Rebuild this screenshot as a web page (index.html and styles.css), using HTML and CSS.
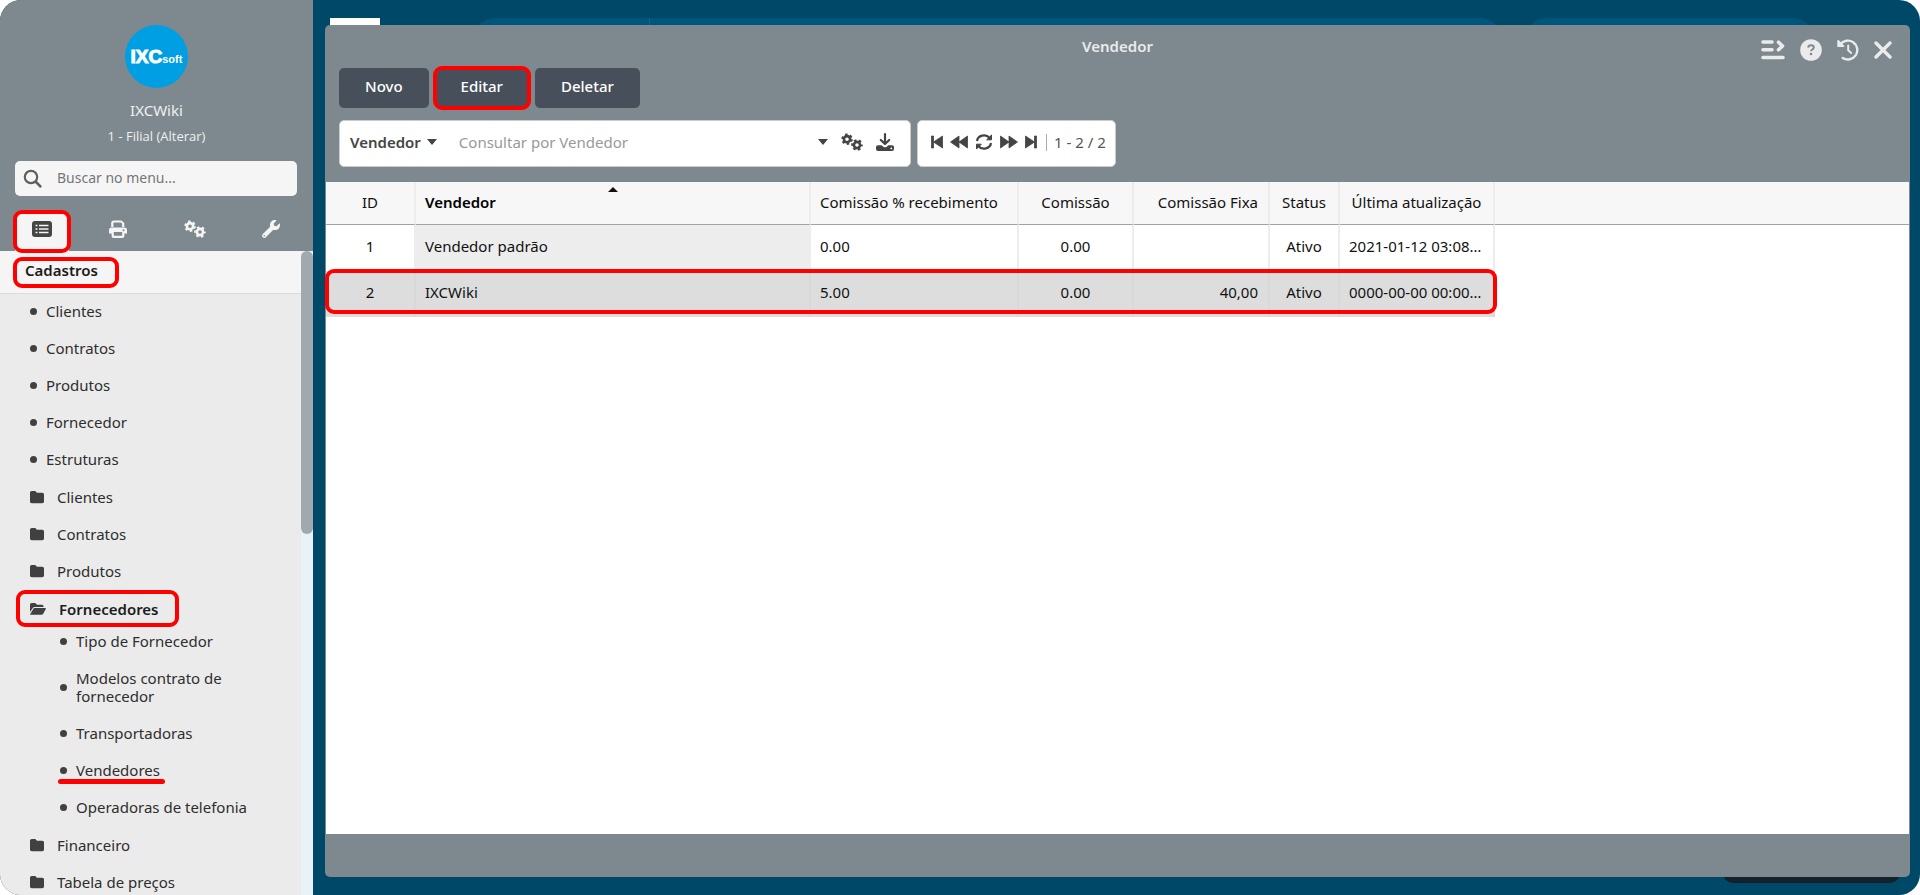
FILE: index.html
```html
<!DOCTYPE html>
<html lang="pt-BR">
<head>
<meta charset="utf-8">
<title>Vendedor</title>
<link rel="stylesheet" href="styles.css">
</head>
<body>
<svg class="defs" aria-hidden="true">
  <symbol id="gears" viewBox="0 0 22 18">
    <g fill="none" stroke="currentColor">
      <circle cx="6" cy="6.2" r="3.1" stroke-width="2.6"/>
      <circle cx="6" cy="6.2" r="4.7" stroke-width="2.2" stroke-dasharray="2.46 2.46"/>
      <circle cx="16" cy="12" r="3.1" stroke-width="2.6"/>
      <circle cx="16" cy="12" r="4.7" stroke-width="2.2" stroke-dasharray="2.46 2.46" stroke-dashoffset="1.2"/>
    </g>
  </symbol>
  <symbol id="folder" viewBox="0 0 512 512"><path fill="currentColor" d="M64 40h130l60 56h194c35 0 64 29 64 64v256c0 35-29 64-64 64H64c-35 0-64-29-64-64V104c0-35 29-64 64-64z"/></symbol>
</svg>
<div class="app">
  <aside class="sidebar">
    <header class="profile">
      <div class="logo"><span class="logo-main">IXC</span><span class="logo-sub">soft</span></div>
      <div class="user">IXCWiki</div>
      <a class="branch" href="#">1 - Filial (Alterar)</a>
      <label class="menu-search">
        <svg width="20" height="20" viewBox="0 0 20 20" fill="none" stroke="currentColor" stroke-width="2.2"><circle cx="8" cy="8" r="6.2"/><path d="M12.5 12.5l5.6 5.6" stroke-width="2.6"/></svg>
        <input type="text" placeholder="Buscar no menu..." aria-label="Buscar no menu">
      </label>
      <nav class="tabs">
        <button class="tab active mark" aria-label="Cadastros">
          <svg width="20" height="16" viewBox="0 0 20 16"><rect width="20" height="16" rx="3" fill="currentColor"/><path d="M3.5 4.5h2M3.5 8h2M3.5 11.5h2M7 4.5h9.5M7 8h9.5M7 11.5h9.5" stroke="#f5f5f5" stroke-width="1.6"/></svg>
        </button>
        <button class="tab" aria-label="Relatórios">
          <svg width="18" height="18" viewBox="0 0 18 18" fill="currentColor"><path d="M2.2 7V3a2.6 2.6 0 0 1 2.600-2.600h7.600l2.900 2.600v4h-2.200V3.800L12 2.500H5a.6.6 0 0 0-.6.6V7z"/><path fill-rule="evenodd" d="M2.500 7.500h13A2.500 2.500 0 0 1 18 10v3.500h-2.600V16a2 2 0 0 1-2 2H4.600a2 2 0 0 1-2-2v-2.500H0V10a2.500 2.500 0 0 1 2.500-2.500zM4.800 12v3.800h8.400V12zM14.500 9.300a1 1 0 1 0 0 2 1 1 0 0 0 0-2z"/></svg>
        </button>
        <button class="tab" aria-label="Configurações"><svg width="22" height="18"><use href="#gears"/></svg></button>
        <button class="tab" aria-label="Ferramentas">
          <svg width="18" height="18" viewBox="0 0 512 512"><path fill="currentColor" d="M507.730 109.100c-2.240-9.030-13.540-12.090-20.120-5.510l-74.360 74.360-67.880-11.310-11.310-67.880 74.360-74.360c6.620-6.620 3.430-17.900-5.660-20.160-47.380-11.740-99.550.91-136.580 37.930-39.640 39.640-50.550 97.100-34.050 147.200L18.740 402.760c-24.990 24.990-24.990 65.510 0 90.500 24.990 24.990 65.510 24.990 90.500 0l213.210-213.210c50.120 16.710 107.470 5.680 147.370-34.220 37.070-37.070 49.700-89.320 37.910-136.730zM64 472c-13.250 0-24-10.750-24-24 0-13.260 10.750-24 24-24s24 10.740 24 24c0 13.250-10.750 24-24 24z"/></svg>
        </button>
      </nav>
    </header>
    <div class="menu">
      <div class="menu-body">
        <h2 class="menu-title"><span class="mark">Cadastros</span></h2>
        <ul class="list">
          <li><a class="item" href="#"><i class="dot"></i>Clientes</a></li>
          <li><a class="item" href="#"><i class="dot"></i>Contratos</a></li>
          <li><a class="item" href="#"><i class="dot"></i>Produtos</a></li>
          <li><a class="item" href="#"><i class="dot"></i>Fornecedor</a></li>
          <li><a class="item" href="#"><i class="dot"></i>Estruturas</a></li>
          <li><a class="item folder" href="#"><svg width="14" height="14"><use href="#folder"/></svg>Clientes</a></li>
          <li><a class="item folder" href="#"><svg width="14" height="14"><use href="#folder"/></svg>Contratos</a></li>
          <li><a class="item folder" href="#"><svg width="14" height="14"><use href="#folder"/></svg>Produtos</a></li>
          <li>
            <a class="item folder open mark" href="#"><svg width="16" height="14" viewBox="0 0 16 14" fill="currentColor"><path d="M0 10V2.500A1.500 1.500 0 0 1 1.500 1h3.800L7 2.700h5A1.500 1.500 0 0 1 13.500 4.200V5H4.800A2.500 2.500 0 0 0 2.600 6.300z"/><path d="M4.600 6H15.300a.6.6 0 0 1 .5.9l-2.600 4.900a2 2 0 0 1-1.700 1H.8a.6.600 0 0 1-.5-.9L3.400 6.700A1.400 1.400 0 0 1 4.600 6z"/></svg>Fornecedores</a>
            <ul class="list sub">
              <li><a class="item" href="#"><i class="dot"></i>Tipo de Fornecedor</a></li>
              <li><a class="item" href="#"><i class="dot"></i>Modelos contrato de fornecedor</a></li>
              <li><a class="item" href="#"><i class="dot"></i>Transportadoras</a></li>
              <li><a class="item underlined" href="#"><i class="dot"></i>Vendedores</a></li>
              <li><a class="item" href="#"><i class="dot"></i>Operadoras de telefonia</a></li>
            </ul>
          </li>
          <li><a class="item folder" href="#"><svg width="14" height="14"><use href="#folder"/></svg>Financeiro</a></li>
          <li><a class="item folder" href="#"><svg width="14" height="14"><use href="#folder"/></svg>Tabela de preços</a></li>
        </ul>
      </div>
      <div class="scrollbar"><div class="thumb"></div></div>
    </div>
  </aside>

  <main class="desktop">
    <div class="backdrop" aria-hidden="true">
      <div class="tile"></div>
      <div class="pill wide"></div>
      <div class="pill narrow"></div>
      <div class="toast"></div>
    </div>
    <section class="window">
      <header class="window-head">
        <h1 class="window-title">Vendedor</h1>
        <div class="window-tools">
          <button aria-label="Menu"><svg width="24" height="20" viewBox="0 0 24 20" fill="none" stroke="currentColor" stroke-width="3.600" stroke-linecap="round" stroke-linejoin="round"><path d="M2 2h9M2 9.800h9M2 17.500h20M17.500 2.200l4 3.800-4 3.800"/></svg></button>
          <button aria-label="Ajuda"><svg width="22" height="22" viewBox="0 0 22 22"><circle cx="11" cy="11" r="10.800" fill="currentColor"/><path d="M8.200 8.600c.1-1.500 1.200-2.300 2.800-2.300s2.800.9 2.800 2.300c0 1.900-2.700 2-2.700 3.700" fill="none" stroke="#7d898e" stroke-width="1.900"/><circle cx="11" cy="15" r="1.300" fill="#7d898e"/></svg></button>
          <button aria-label="Histórico"><svg width="22" height="22" viewBox="0 0 22 22" fill="none" stroke="currentColor" stroke-width="2.400" stroke-linecap="round" stroke-linejoin="round"><path d="M3.200 5.600A9.400 9.400 0 1 1 5.700 18.900"/><path d="M1.200 2v5.200h5.200z" fill="currentColor" stroke-width="1.800"/><path d="M11.200 6.500v4.800l3 2.700" stroke-width="2"/></svg></button>
          <button aria-label="Fechar"><svg width="18" height="18" viewBox="0 0 18 18" fill="none" stroke="currentColor" stroke-width="3.400" stroke-linecap="round"><path d="M2 2l14 14M16 2L2 16"/></svg></button>
        </div>
        <div class="actions">
          <button class="action">Novo</button>
          <button class="action mark">Editar</button>
          <button class="action">Deletar</button>
        </div>
        <div class="filters">
          <div class="panel query">
            <button class="field">Vendedor<i class="caret"></i></button>
            <input type="text" placeholder="Consultar por Vendedor" aria-label="Consultar por Vendedor">
            <button aria-label="Opções"><i class="caret"></i></button>
            <button aria-label="Configurar"><svg width="22" height="18"><use href="#gears"/></svg></button>
            <button aria-label="Exportar"><svg width="18" height="18" viewBox="0 0 18 18" fill="none" stroke="currentColor" stroke-width="2.200" stroke-linecap="round" stroke-linejoin="round"><path d="M9 1.200v9M4.800 7L9 11l4.200-4"/><path fill="currentColor" stroke="none" fill-rule="evenodd" d="M2 12.300h3.500L8 14.200h2l2.500-1.900H16a2 2 0 0 1 2 2V16a2 2 0 0 1-2 2H2a2 2 0 0 1-2-2v-1.700a2 2 0 0 1 2-2zm13.300 2.200a.9.9 0 1 0 0 1.800.9.9 0 0 0 0-1.800z"/></svg></button>
          </div>
          <div class="panel pager">
            <button aria-label="Primeira"><svg width="12" height="14" viewBox="0 0 12 14" fill="currentColor"><path d="M.5 1h2v12h-2zM11.500 1v12L2.500 7z" stroke="currentColor" stroke-width=".8"/></svg></button>
            <button aria-label="Anterior"><svg width="18" height="14" viewBox="0 0 18 14" fill="currentColor"><path d="M9 1v12L.5 7zM17.500 1v12L9 7z" stroke="currentColor" stroke-width=".8" stroke-linejoin="round"/></svg></button>
            <button aria-label="Atualizar"><svg width="18" height="16" viewBox="0 0 18 16" fill="none" stroke="currentColor" stroke-width="2.200"><path d="M2 7a7 6.400 0 0 1 12.600-3M16 9a7 6.400 0 0 1-12.600 3"/><path d="M16.500 1v4.800h-4.800zM1.500 15v-4.800h4.800z" fill="currentColor" stroke-width="1" stroke-linejoin="round"/></svg></button>
            <button aria-label="Próxima"><svg width="18" height="14" viewBox="0 0 18 14" fill="currentColor"><path d="M.5 1v12L9 7zM9 1v12l8.500-6z" stroke="currentColor" stroke-width=".8" stroke-linejoin="round"/></svg></button>
            <button aria-label="Última"><svg width="12" height="14" viewBox="0 0 12 14" fill="currentColor"><path d="M9.500 1h2v12h-2zM.5 1v12L9.500 7z" stroke="currentColor" stroke-width=".8"/></svg></button>
            <span class="count">1 - 2 / 2</span>
          </div>
        </div>
      </header>
      <div class="grid">
        <table>
          <colgroup><col class="c-id"><col class="c-name"><col class="c-rec"><col class="c-com"><col class="c-fix"><col class="c-sta"><col class="c-upd"><col></colgroup>
          <thead>
            <tr><th class="mid">ID</th><th class="sorted">Vendedor</th><th>Comissão % recebimento</th><th class="mid">Comissão</th><th class="end">Comissão Fixa</th><th class="mid">Status</th><th class="mid">Última atualização</th><th></th></tr>
          </thead>
          <tbody>
            <tr><td class="mid">1</td><td class="sorted">Vendedor padrão</td><td>0.00</td><td class="mid">0.00</td><td class="end"></td><td class="mid">Ativo</td><td>2021-01-12 03:08:22</td><td></td></tr>
            <tr class="selected"><td class="mid">2</td><td>IXCWiki</td><td>5.00</td><td class="mid">0.00</td><td class="end">40,00</td><td class="mid">Ativo</td><td>0000-00-00 00:00:00</td><td></td></tr>
          </tbody>
        </table>
        <div class="row-mark"></div>
      </div>
      <footer class="window-foot"></footer>
    </section>
  </main>
</div>
</body>
</html>
```
FILE: styles.css
```css
* { box-sizing: border-box; }
html { background: #fff; }
body { margin: 0; font: 15px/20px "Noto Sans", "Open Sans", sans-serif; color: #1c1c1c; }
button { border: 0; padding: 0; background: none; color: inherit; font: inherit; }
input { border: 0; padding: 0; background: none; font: inherit; color: inherit; outline: none; min-width: 0; }
ul { list-style: none; margin: 0; padding: 0; }
a { color: inherit; text-decoration: none; }
svg { display: block; flex: none; }
.defs { position: absolute; width: 0; height: 0; }

.app { display: flex; height: 100vh; border-radius: 21px; overflow: hidden; background: #004868; }

/* red highlight frame */
.mark { position: relative; }
.mark::after { content: ""; position: absolute; inset: -2px; border: 4px solid #f00; border-radius: 9px; pointer-events: none; }

/* sidebar */
.sidebar { flex: none; width: 313px; display: flex; flex-direction: column; background: #7d898e; }
.profile { display: flex; flex-direction: column; align-items: center; padding: 25px 15px 0; color: #f0f0f0; }
.logo { width: 63px; height: 63px; border-radius: 50%; background: #009fe3; color: #fff; display: flex; align-items: baseline; justify-content: center; line-height: 63px; font-family: "Liberation Sans", Arial, sans-serif; font-weight: bold; }
.logo-main { font-size: 19px; -webkit-text-stroke: 1px #fff; }
.logo-sub { font-size: 11px; }
.user { margin-top: 12px; }
.branch { margin-top: 6px; font-family: "Open Sans", "Noto Sans", sans-serif; font-size: 13px; }
.menu-search { align-self: stretch; display: flex; align-items: center; gap: 14px; height: 35px; margin: 15px 1px 0 0; padding: 0 8px; border-radius: 5px; background: #f5f5f5; color: #606060; font-size: 14px; }
.menu-search input { flex: 1; padding-bottom: 1px; }
.menu-search input::placeholder { color: #757575; opacity: 1; }
.tabs { align-self: stretch; display: flex; justify-content: space-between; margin-top: 16px; }
.tab { width: 54px; height: 39px; padding-bottom: 5px; display: flex; align-items: center; justify-content: center; color: #f5f5f5; }
.tab.active { background: #f5f5f5; color: #454545; border-radius: 6px 6px 0 0; }

.menu { flex: 1; display: flex; min-height: 0; }
.menu-body { flex: 1; overflow: hidden; background: #ebebeb; }
.menu-title { margin: 0; height: 43px; padding: 8px 0 0 15px; background: #f5f5f5; border-bottom: 1px solid #dcdcdc; font-size: 15px; font-weight: 600; }
.menu-title .mark { display: inline-block; padding: 1px 19px 6px 10px; line-height: 20px; }
.item { display: flex; align-items: center; gap: 9px; min-height: 37px; padding: 8px 30px 11px; line-height: 18px; color: #2e2e2e; }
.dot { flex: none; width: 7px; height: 7px; border-radius: 50%; background: #404040; }
.item svg { color: #404040; }
.folder { gap: 13px; padding: 9px 30px 10px; }
.open { min-height: 34px; padding: 10px 30px 6px; font-weight: 600; color: #1c1c1c; }
.open::after { inset: 0 122px -3px 16px; }
.sub .item { padding-left: 60px; }
.underlined { position: relative; }
.underlined::after { content: ""; position: absolute; left: 58px; bottom: 6px; width: 107px; height: 5px; border-radius: 3px; background: #f00; }
.scrollbar { flex: none; width: 12px; background: #e9f2f6; }
.thumb { height: 44%; border-radius: 6px; background: #a1a9ae; }

/* desktop behind the window */
.desktop { flex: 1; min-width: 0; position: relative; display: flex; padding: 25px 10px 18px 12px; }
.backdrop { position: absolute; inset: 0; }
.backdrop > div { position: absolute; }
.tile { left: 17px; top: 18px; width: 50px; height: 50px; background: #fff; }
.pill { top: 18px; height: 44px; border-radius: 22px; background: #00557c; }
.wide { left: 160px; right: 418px; }
.wide::before { content: ""; position: absolute; left: 176px; top: 0; width: 1px; height: 100%; background: #1a6488; }
.narrow { left: 1212px; right: 105px; }
.toast { right: 20px; bottom: 12px; width: 177px; height: 40px; border-radius: 10px; background: #12212b; }

/* window */
.window { position: relative; flex: 1; min-width: 0; display: flex; flex-direction: column; border-radius: 5px; background: #7d898e; }
.window-head { position: relative; padding: 11px 14px 15px; }
.window-title { margin: 0; text-align: center; font-size: 15px; font-weight: 600; color: #ebebeb; }
.window-tools { position: absolute; top: 14px; right: 18px; display: flex; align-items: center; gap: 15px; color: #ebebeb; }
.actions { display: flex; gap: 6px; margin-top: 12px; }
.action { height: 40px; padding: 0 26px 5px; border-radius: 5px; background: #464f5a; color: #fff; font-weight: 500; }
.filters { display: flex; gap: 6px; margin-top: 12px; color: #444; }
.panel { display: flex; align-items: center; height: 47px; padding-bottom: 3px; border: 1px solid #ccc; border-radius: 5px; background: #fff; }
.query { width: 572px; gap: 13px; padding-right: 16px; padding-left: 10px; }
.query input { flex: 1; }
.query input::placeholder { color: #999; opacity: 1; }
.field { display: flex; align-items: center; gap: 6px; margin-right: 9px; font-weight: 600; }
.caret { display: block; width: 0; border: 5px solid transparent; border-top: 6px solid #444; border-bottom: 0; }
.pager { gap: 7px; padding-right: 9px; padding-left: 13px; }
.count { margin-left: 2px; padding-left: 7px; border-left: 1px solid #aaa; line-height: 17px; color: #555; }

/* data table */
.grid { position: relative; flex: 1; min-height: 0; margin: 0 1px; background: #fff; }
table { width: 100%; table-layout: fixed; border-collapse: separate; border-spacing: 0; color: #111; }
.c-id { width: 90px; }
.c-name { width: 395px; }
.c-rec { width: 208px; }
.c-com { width: 115px; }
.c-fix { width: 136px; }
.c-sta { width: 70px; }
.c-upd { width: 155px; }
th, td { height: 46px; padding: 0 9px 5px; border-right: 2px solid #ededed; text-align: left; font-weight: 400; white-space: nowrap; overflow: hidden; text-overflow: ellipsis; }
th { position: relative; height: 43px; padding-bottom: 3px; background: #f7f7f7; border-bottom: 1px solid #9ba3ab; }
th:last-child, td:last-child { border-right: 0; }
th.sorted { font-weight: 600; color: #000; }
th.sorted::before { content: ""; position: absolute; top: 5px; left: 50%; margin-left: -5px; border: 5px solid transparent; border-top: 0; border-bottom: 5px solid #111; }
td.sorted { background: #ededed; }
.selected td:not(:last-child) { background: #ddd; border-right-color: #d8d8d8; }
.mid { padding-left: 4px; padding-right: 4px; text-align: center; }
.end { padding-right: 10px; text-align: right; }
.row-mark { position: absolute; left: -1px; top: 87px; width: 1172px; height: 45px; border: 4px solid #f00; border-radius: 9px; }
.window-foot { height: 43px; }
```
